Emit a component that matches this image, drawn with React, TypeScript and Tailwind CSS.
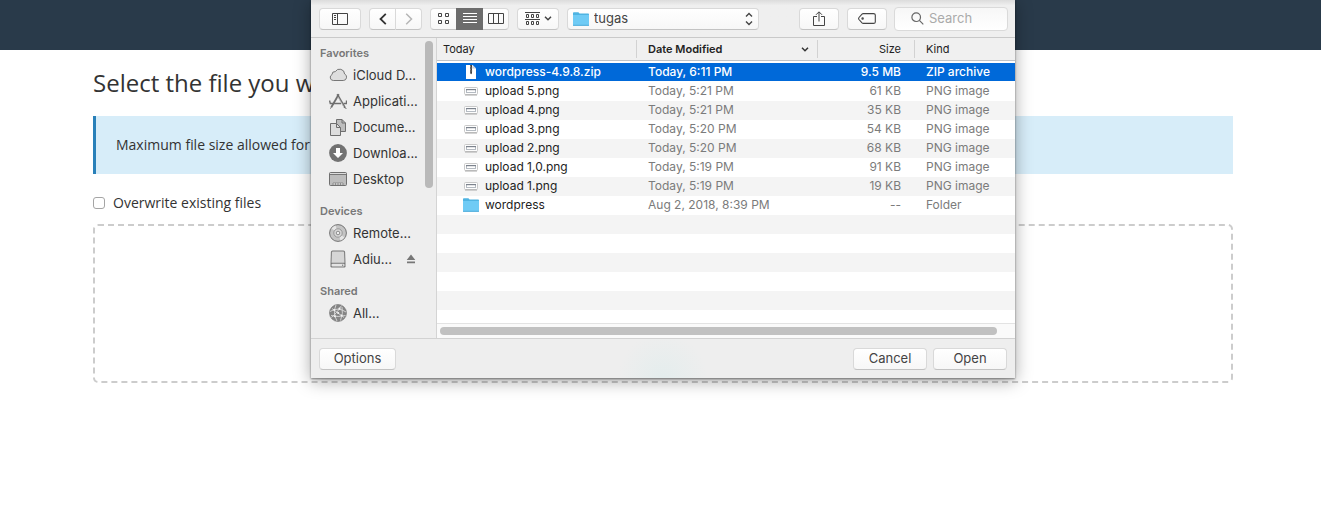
import { useState } from "react";
import type { ReactNode } from "react";

type FileKind = "zip" | "png" | "folder";

interface FileRow {
	name: string;
	modified: string;
	size: string;
	kind: string;
	type: FileKind;
}

const files: FileRow[] = [
	{ name: "wordpress-4.9.8.zip", modified: "Today, 6:11 PM", size: "9.5 MB", kind: "ZIP archive", type: "zip" },
	{ name: "upload 5.png", modified: "Today, 5:21 PM", size: "61 KB", kind: "PNG image", type: "png" },
	{ name: "upload 4.png", modified: "Today, 5:21 PM", size: "35 KB", kind: "PNG image", type: "png" },
	{ name: "upload 3.png", modified: "Today, 5:20 PM", size: "54 KB", kind: "PNG image", type: "png" },
	{ name: "upload 2.png", modified: "Today, 5:20 PM", size: "68 KB", kind: "PNG image", type: "png" },
	{ name: "upload 1,0.png", modified: "Today, 5:19 PM", size: "91 KB", kind: "PNG image", type: "png" },
	{ name: "upload 1.png", modified: "Today, 5:19 PM", size: "19 KB", kind: "PNG image", type: "png" },
	{ name: "wordpress", modified: "Aug 2, 2018, 8:39 PM", size: "--", kind: "Folder", type: "folder" },
];

const emptyRows = [0, 1, 2, 3, 4];

const buttonClass =
	"flex h-[22px] items-center justify-center rounded border border-[#d9d9d9] border-b-[#c3c3c3] bg-gradient-to-b from-white to-[#f7f7f7] text-[#444]";

function FolderIcon() {
	return (
		<svg width="16" height="14" viewBox="0 0 16 14" className="shrink-0">
			<path d="M0 1.2Q0 .3.8.3H5.4L6.6 1.6H15.2Q16 1.6 16 2.4V13.2H0Z" fill="#4fb4e2" />
			<path d="M0 3H16V13Q16 13.7 15.3 13.7H.7Q0 13.7 0 13Z" fill="#6fcbf5" />
			<path d="M0 13.3H16" stroke="#4aa6d3" strokeWidth=".8" />
		</svg>
	);
}

function ZipIcon() {
	return (
		<svg width="16" height="16" viewBox="0 0 16 16" className="shrink-0">
			<path d="M3 1H9.5L13 4.5V15H3Z" fill="#fff" />
			<path d="M9.5 1V4.5H13Z" fill="#c9ced6" />
			<path d="M7.2 1H9V8.2Q9 10.3 8.1 10.3T7.2 8.2Z" fill="#3f3f3f" />
			<path d="M7 2.5H8M8.2 4H9.4M7 5.5H8M8.2 7H9.4" stroke="#999" strokeWidth=".7" />
		</svg>
	);
}

function PngIcon() {
	return (
		<svg width="16" height="14" viewBox="0 0 16 14" className="shrink-0">
			<rect x="1.5" y="3.5" width="13" height="7" rx="1" fill="#fdfdfd" stroke="#c9c9c9" />
			<path d="M2 11H14" stroke="#aaa" />
			<rect x="3.5" y="5.5" width="9" height="3" fill="#fff" stroke="#b5bbc2" />
			<path d="M3 5.7H13" stroke="#6f7780" />
		</svg>
	);
}

function FileIcon({ type }: { type: FileKind }) {
	if (type === "zip") return <ZipIcon />;
	if (type === "folder") return <FolderIcon />;
	return <PngIcon />;
}

const cloudIcon = (
	<path
		d="M4.3 14.5H14.2A3.4 3.4 0 0 0 15.6 8 5 5 0 0 0 6.3 5.6 3 3 0 0 0 3 8.6 3.1 3.1 0 0 0 4.3 14.5Z"
		fill="#dedede"
		stroke="#777"
	/>
);

const applicationsIcon = (
	<g fill="none" stroke="#6f6f6f">
		<path d="M9.8 2.3 2.3 15.2" strokeWidth="1.8" />
		<path d="M8.2 2.3 16 15.7" strokeWidth="1.8" />
		<path d="M9 5 14.8 15" stroke="#eee" strokeWidth=".5" />
		<path d="M.5 8.5 1.3 11.5H12M14.5 11.5H17.5V8.5" strokeWidth="1.4" />
		<path d="M1 16.5 2.6 15.3M15.5 15 17.4 17" />
	</g>
);

const documentsIcon = (
	<g fill="#dedede" stroke="#6f6f6f">
		<path d="M7.5 1.5H13L16.5 5V13.5H7.5Z" fill="#bdbdbd" />
		<path d="M13 1.5V5H16.5" fill="none" />
		<path d="M1.5 5.5H7.5L11.5 9.5V17.5H1.5Z" />
		<path d="M7.5 5.5V9.5H11.5" fill="none" />
	</g>
);

const downloadsIcon = (
	<>
		<circle cx="9" cy="9" r="8.9" fill="#727272" />
		<path d="M7 4H11V9H14L9 14 4 9H7Z" fill="#fff" />
	</>
);

const desktopIcon = (
	<>
		<rect x=".5" y="2.5" width="17" height="13" rx="1" fill="#bdbdbd" stroke="#6f6f6f" />
		<path d="M1 4.5H17" stroke="#777" />
		<path d="M1 3.5H17" stroke="#ddd" />
		<path d="M4 15V13H14V15Z" fill="#eee" stroke="#777" strokeWidth=".7" />
		<path d="M6.5 13V15M9 13V15M11.5 13V15" stroke="#777" strokeWidth=".7" />
	</>
);

const discIcon = (
	<g fill="none">
		<circle cx="9" cy="9" r="8.4" fill="#c4c4c4" stroke="#747474" />
		<path d="M9 9 2.5 4.5A8 8 0 0 1 6.5 1.6ZM9 9 15.5 13.5A8 8 0 0 1 11.5 16.4Z" fill="#e6e6e6" />
		<circle cx="9" cy="9" r="4.2" fill="#d9d9d9" stroke="#888" strokeWidth=".8" />
		<circle cx="9" cy="9" r="1.8" fill="#eee" stroke="#777" strokeWidth=".8" />
	</g>
);

const driveIcon = (
	<>
		<path d="M3.6.5H14.4Q16 .5 16.1 2L16.5 13.2V16.3Q16.5 17.5 15.3 17.5H2.7Q1.5 17.5 1.5 16.3V13.2L1.9 2Q2 .5 3.6.5Z" fill="#777" />
		<path d="M3.8 1.5H14.2Q15 1.5 15.1 2.4L15.5 12.8H2.5L2.9 2.4Q3 1.5 3.8 1.5Z" fill="#d6d6d6" />
		<rect x="2.5" y="13.7" width="13" height="2.9" rx="1" fill="#e4e4e4" />
		<path d="M13 15.2H14.2" stroke="#666" />
	</>
);

const networkIcon = (
	<>
		<circle cx="9" cy="9" r="8.5" fill="#858585" stroke="#707070" strokeWidth=".6" />
		<g fill="none" stroke="#d9d9d9" strokeWidth=".9">
			<path d="M1 7.5Q9 2.5 17 8M3 4.5 15 13.5M2.5 13.5Q9 8 12.5 1.5M7 1Q3.5 9 8 17M13 3Q14.5 9 11.5 16.5M2 11.5Q9 13.5 16.5 11.5" />
		</g>
		<g fill="#f4f4f4">
			<circle cx="10.5" cy="4.7" r="1.1" />
			<circle cx="5.2" cy="6" r=".9" />
			<circle cx="9.2" cy="9" r="1" />
			<circle cx="12.6" cy="11.6" r="1" />
			<circle cx="5.9" cy="12.2" r="1" />
		</g>
	</>
);

interface SidebarItem {
	label: string;
	icon: ReactNode;
	ejectable?: boolean;
}

const sidebar: { title: string; items: SidebarItem[] }[] = [
	{
		title: "Favorites",
		items: [
			{ label: "iCloud D...", icon: cloudIcon },
			{ label: "Applicati...", icon: applicationsIcon },
			{ label: "Docume...", icon: documentsIcon },
			{ label: "Downloa...", icon: downloadsIcon },
			{ label: "Desktop", icon: desktopIcon },
		],
	},
	{
		title: "Devices",
		items: [
			{ label: "Remote...", icon: discIcon },
			{ label: "Adiu...", icon: driveIcon, ejectable: true },
		],
	},
	{
		title: "Shared",
		items: [{ label: "All...", icon: networkIcon }],
	},
];

function Toolbar() {
	return (
		<div className="flex h-[38px] items-center border-b border-[#c9c9c9] bg-gradient-to-b from-[#dcdcdc] via-[#efefef] via-15% to-[#efefef] pr-[7px] pl-2">
			<button type="button" aria-label="Toggle sidebar" className={`${buttonClass} w-[42px]`}>
				<svg width="16" height="12" viewBox="0 0 16 12" fill="none" stroke="currentColor">
					<path d="M.5.5H15.5V11.5H.5ZM5.5.5V11.5M2 2.5H4M2 4.5H4M2 6.5H4" />
				</svg>
			</button>
			<div className="ml-2 flex">
				<button type="button" aria-label="Back" className={`${buttonClass} w-[27px] rounded-r-none`}>
					<svg width="8" height="12" viewBox="0 0 8 12" fill="none" stroke="#333" strokeWidth="1.8">
						<path d="M6.8.8 1.5 6 6.8 11.2" />
					</svg>
				</button>
				<button type="button" aria-label="Forward" className={`${buttonClass} w-[26px] rounded-l-none border-l-0`}>
					<svg width="8" height="12" viewBox="0 0 8 12" fill="none" stroke="#b5b5b5" strokeWidth="1.5">
						<path d="M1.2.8 6.5 6 1.2 11.2" />
					</svg>
				</button>
			</div>
			<div className="ml-2 flex">
				<button type="button" aria-label="Icon view" className={`${buttonClass} w-[26px] rounded-r-none border-r-0`}>
					<svg width="11" height="11" viewBox="0 0 11 11" fill="none" stroke="currentColor">
						<path d="M.5.5H3.5V3.5H.5ZM7.5.5H10.5V3.5H7.5ZM.5 7.5H3.5V10.5H.5ZM7.5 7.5H10.5V10.5H7.5Z" />
					</svg>
				</button>
				<button
					type="button"
					aria-label="List view"
					aria-pressed="true"
					className="flex h-[22px] w-[27px] items-center justify-center bg-[#6c6c6c] text-white"
				>
					<svg width="14" height="11" viewBox="0 0 14 11" fill="none" stroke="currentColor">
						<path d="M0 .5H14M0 3.5H14M0 6.5H14M0 9.5H14" />
					</svg>
				</button>
				<button type="button" aria-label="Column view" className={`${buttonClass} w-[26px] rounded-l-none border-l-0`}>
					<svg width="16" height="11" viewBox="0 0 16 11" fill="none" stroke="currentColor">
						<path d="M.5.5H15.5V10.5H.5ZM5.5.5V10.5M10.5.5V10.5" />
					</svg>
				</button>
			</div>
			<button type="button" aria-label="Group items" className={`${buttonClass} ml-2 w-[42px] gap-1`}>
				<svg width="15" height="13" viewBox="0 0 15 13" fill="none" stroke="currentColor">
					<path d="M0 .5H15M0 7.5H15" />
					<path d="M1.5 2.5H3.5V5.5H1.5ZM6.5 2.5H8.5V5.5H6.5ZM11.5 2.5H13.5V5.5H11.5ZM1.5 9.5H3.5V12.5H1.5ZM6.5 9.5H8.5V12.5H6.5ZM11.5 9.5H13.5V12.5H11.5Z" />
				</svg>
				<svg width="8" height="5" viewBox="0 0 8 5" fill="none" stroke="currentColor" strokeWidth="1.5">
					<path d="M1 .8 4 3.8 7 .8" />
				</svg>
			</button>
			<div className="relative ml-2 flex w-[192px] items-center">
				<select aria-label="Current folder" className={`${buttonClass} w-full appearance-none pl-[26px] text-[13px]`}>
					<option>tugas</option>
				</select>
				<span className="pointer-events-none absolute inset-x-[6px] flex items-center justify-between">
					<FolderIcon />
					<svg width="8" height="14" viewBox="0 0 8 14" fill="none" stroke="#444" strokeWidth="1.4">
						<path d="M1 4.5 4 1.5 7 4.5M1 9.5 4 12.5 7 9.5" />
					</svg>
				</span>
			</div>
			<button type="button" aria-label="Share" className={`${buttonClass} ml-auto w-10`}>
				<svg width="12" height="16" viewBox="0 0 12 16" fill="none" stroke="currentColor">
					<path d="M4 5.5H.5V14.5H11.5V5.5H8M6 10.5V1M3 3.8 6 .8 9 3.8" />
				</svg>
			</button>
			<button type="button" aria-label="Edit tags" className={`${buttonClass} ml-2 w-10`}>
				<svg width="18" height="11" viewBox="0 0 18 11" fill="none" stroke="currentColor" strokeWidth="1.1">
					<path d="M5.2.6H15.5Q17.3.6 17.3 2V9Q17.3 10.4 15.5 10.4H5.2Q4.5 10.4 4 9.9L1 6.5Q.2 5.5 1 4.5L4 1.1Q4.5.6 5.2.6Z" />
					<circle cx="4.6" cy="5.5" r=".7" />
				</svg>
			</button>
			<label className="ml-[7px] flex h-6 w-[114px] items-center rounded border border-[#dadada] bg-gradient-to-b from-[#f7f7f7] to-white pl-4">
				<svg width="13" height="13" viewBox="0 0 13 13" fill="none" stroke="#666" strokeWidth="1.2" className="shrink-0">
					<circle cx="5.2" cy="5.2" r="4.3" />
					<path d="M8.4 8.4 12.3 12.3" />
				</svg>
				<input
					type="text"
					aria-label="Search"
					placeholder="Search"
					className="ml-[5px] w-full min-w-0 bg-transparent text-[13px] outline-none placeholder:text-[#aaa]"
				/>
			</label>
		</div>
	);
}

function Sidebar() {
	return (
		<nav className="relative flex w-[126px] shrink-0 flex-col gap-[10px] border-r border-[#d4d4d4] pt-[6px] pb-3">
			{sidebar.map((group) => (
				<div key={group.title}>
					<h2 className="h-[18px] pl-[9px] text-[11px] leading-[18px] font-semibold text-[#777]">{group.title}</h2>
					<ul>
						{group.items.map((item) => (
							<li key={item.label} className="flex h-[26px] items-center pr-5 pl-[18px]">
								<a href="#files" className="flex flex-1 items-center gap-[6px] text-[13px] whitespace-nowrap text-[#333]">
									<svg width="18" height="18" viewBox="0 0 18 18" className="shrink-0">
										{item.icon}
									</svg>
									{item.label}
								</a>
								{item.ejectable && (
									<button type="button" aria-label="Eject">
										<svg width="10" height="10" viewBox="0 0 10 10" fill="#777">
											<path d="M5 .5 9.3 6H.7ZM1 7.5H9V9.2H1Z" />
										</svg>
									</button>
								)}
							</li>
						))}
					</ul>
				</div>
			))}
			<div className="absolute top-[3px] right-[3px] h-[147px] w-2 rounded-full bg-[#b9b9b9]" />
		</nav>
	);
}

function rowClass(index: number, active: boolean) {
	if (active) return "h-[19px] bg-[#0069d9] font-medium text-white";
	return index % 2 === 0 && index > 0 ? "h-[19px] bg-[#f4f4f4] text-[#7b7b7b]" : "h-[19px] text-[#7b7b7b]";
}

function FileTable() {
	const [selected, setSelected] = useState("wordpress-4.9.8.zip");

	return (
		<div id="files" className="flex min-w-0 flex-1 flex-col bg-white">
			<table className="w-full table-fixed border-separate border-spacing-0 text-xs leading-[18px]">
				<colgroup>
					<col className="w-[200px]" />
					<col className="w-[181px]" />
					<col className="w-[97px]" />
					<col />
				</colgroup>
				<thead>
					<tr className="h-[23px] bg-[#f0f0f0] text-left text-[11px] text-[#222]">
						<th className="border-b border-[#bfc3c8] p-0 pl-[6px] font-normal">
							<span className="flex justify-between">
								Today
								<span className="border-r border-[#d2d2d2]" />
							</span>
						</th>
						<th className="border-b border-[#bfc3c8] p-0 pl-[11px] font-semibold">
							<span className="flex items-center">
								Date Modified
								<svg width="8" height="5" viewBox="0 0 8 5" fill="none" stroke="#333" strokeWidth="1.5" className="mr-2 ml-auto">
									<path d="M1 .8 4 3.8 7 .8" />
								</svg>
								<span className="h-[18px] border-r border-[#d2d2d2]" />
							</span>
						</th>
						<th className="border-b border-[#bfc3c8] p-0 font-normal">
							<span className="flex justify-end">
								Size
								<span className="w-[14px] border-r border-[#d2d2d2]" />
							</span>
						</th>
						<th className="border-b border-[#bfc3c8] p-0 pl-[11px] font-normal">Kind</th>
					</tr>
				</thead>
				<tbody>
					<tr className="h-[2px]">
						<td colSpan={4} className="p-0" />
					</tr>
					{files.map((file, index) => {
						const active = file.name === selected;
						const line = active ? "border-b border-white" : "border-b border-transparent";
						return (
							<tr key={file.name} onClick={() => setSelected(file.name)} className={rowClass(index, active)}>
								<td className={`${line} p-0 pl-[26px]`}>
									<span className={active ? "flex items-center gap-[6px]" : "flex items-center gap-[6px] text-[#222]"}>
										<FileIcon type={file.type} />
										{file.name}
									</span>
								</td>
								<td className={`${line} p-0 pl-[11px]`}>{file.modified}</td>
								<td className={`${line} p-0 pr-[14px] text-right`}>{file.size}</td>
								<td className={`${line} p-0 pl-[11px]`}>{file.kind}</td>
							</tr>
						);
					})}
					{emptyRows.map((row) => (
						<tr key={row} className={row % 2 === 0 ? "h-[19px] bg-[#f4f4f4]" : "h-[19px]"}>
							<td colSpan={4} className="p-0" />
						</tr>
					))}
				</tbody>
			</table>
			<div className="mt-auto flex h-[15px] items-center border-t border-[#e3e3e3] bg-[#fafafa] pr-[18px] pl-[3px]">
				<div className="h-2 flex-1 rounded-full bg-[#c1c1c1]" />
			</div>
		</div>
	);
}

function FileDialog() {
	return (
		<div
			role="dialog"
			aria-label="Open file"
			className="w-[704px] bg-[#eee] font-['Inter',sans-serif] shadow-[0_1px_2px_rgba(0,0,0,0.45),0_3px_16px_rgba(0,0,0,0.35)]"
		>
			<Toolbar />
			<div className="flex">
				<Sidebar />
				<FileTable />
			</div>
			<div className="flex h-10 items-center border-t border-[#d2d2d2] bg-[radial-gradient(circle_at_50%_100%,#e4eded,#eeeeee_45px)] px-2 text-[13px]">
				<button type="button" className={`${buttonClass} w-[77px]`}>
					Options
				</button>
				<button type="button" className={`${buttonClass} mr-[6px] ml-auto w-[74px]`}>
					Cancel
				</button>
				<button type="button" className={`${buttonClass} w-[74px]`}>
					Open
				</button>
			</div>
		</div>
	);
}

export default function App() {
	const [overwrite, setOverwrite] = useState(false);

	return (
		<div className="relative min-h-screen bg-white font-['Open_Sans',sans-serif] text-sm text-[#333]">
			<header className="h-[50px] bg-[#293a4a]" />
			<main className="pl-[5px]">
				<div className="mx-auto max-w-[1140px] pt-4">
					<h1 className="text-2xl leading-[34px]">Select the file you w</h1>
					<p className="mt-4 border-l-3 border-[#2980b9] bg-[#d7edf9] py-[19px] pl-5 leading-5">
						Maximum file size allowed for
					</p>
					<label className="mt-[19px] flex items-center gap-2 leading-5">
						<input
							type="checkbox"
							checked={overwrite}
							onChange={(e) => setOverwrite(e.target.checked)}
							className="size-3 appearance-none rounded-[3px] border border-[#a5a5a5] bg-white checked:bg-[#2980b9]"
						/>
						Overwrite existing files
					</label>
					<div className="mt-[11px] h-[159px] rounded-[5px] border-2 border-dashed border-[#ccc]" />
				</div>
			</main>
			<div className="absolute inset-x-0 top-0 flex justify-center pl-[5px]">
				<FileDialog />
			</div>
		</div>
	);
}
